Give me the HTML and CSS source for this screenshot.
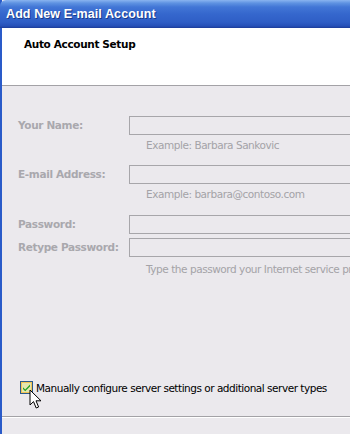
FILE: index.html
```html
<!DOCTYPE html>
<html>
<head>
<meta charset="utf-8">
<link rel="stylesheet" href="styles.css">
</head>
<body>
<div class="window">
  <div class="titlebar"><span class="title">Add New E-mail Account</span></div>
  <div class="header"><div class="heading">Auto Account Setup</div></div>
  <div class="content">
    <div class="form">
      <div class="row row-first">
        <label class="label">Your Name:</label>
        <div class="field"><div class="input"></div><div class="hint">Example: Barbara Sankovic</div></div>
      </div>
      <div class="row row-email">
        <label class="label">E-mail Address:</label>
        <div class="field"><div class="input"></div><div class="hint">Example: barbara@contoso.com</div></div>
      </div>
      <div class="row row-pass">
        <label class="label">Password:</label>
        <div class="field"><div class="input"></div></div>
      </div>
      <div class="row row-retype">
        <label class="label">Retype Password:</label>
        <div class="field"><div class="input"></div><div class="hint hint-long">Type the password your Internet service provider has given you.</div></div>
      </div>
    </div>
    <div class="manual">
      <span class="checkbox">
        <svg width="13" height="13" viewBox="0 0 13 13">
          <rect x="0.5" y="0.5" width="12" height="12" fill="#e3e7b0" stroke="#2b5a8a"/>
          <rect x="1.5" y="1.5" width="10" height="10" fill="none" stroke="#f2c454" stroke-width="1"/>
          <path d="M3 6.2 L5.2 8.6 L10 3.6 L10 5.4 L5.2 10.3 L3 8 Z" fill="#21a121"/>
        </svg>
        <svg class="cursor" width="14" height="21" viewBox="0 0 14 21">
          <path d="M1 1 L1 16 L4.5 12.6 L7.2 19 L9.6 18 L7 11.8 L12 11.8 Z" fill="#fff" stroke="#000" stroke-width="1" stroke-linejoin="miter"/>
        </svg>
      </span>
      <span class="manual-text">Manually configure server settings or additional server types</span>
    </div>
    <div class="footer-line"></div>
  </div>
</div>
</body>
</html>
```
FILE: styles.css
```css
html, body {
  margin: 0;
  padding: 0;
  width: 350px;
  height: 434px;
  overflow: hidden;
  background: #ebe9ed;
}
.window {
  width: 520px;
  height: 434px;
  border-left: 2px solid #2a5bc9;
  box-sizing: border-box;
  display: flex;
  flex-direction: column;
  font-family: "Liberation Sans", Arial, sans-serif;
}
.titlebar {
  height: 28px;
  flex: none;
  margin-left: -2px;
  background: linear-gradient(to bottom, #8ab4f0 0px, #5f93e2 3px, #4276d6 7px, #3567cd 14px, #2f5ec6 22px, #2650b8 26px, #1c3c98 28px);
  display: flex;
  align-items: center;
  padding-left: 6px;
  border-top-left-radius: 6px;
}
.title {
  color: #fff;
  font-weight: bold;
  font-size: 12.5px;
  text-shadow: 1px 1px 0 #1a3a8a;
  letter-spacing: 0.1px;
}
.header {
  height: 57px;
  flex: none;
  background: #fff;
  border-bottom: 1px solid #a3a2a6;
  box-sizing: content-box;
}
.heading {
  font-family: "DejaVu Sans", sans-serif;
  font-size: 10.5px;
  font-weight: bold;
  color: #000;
  padding-left: 22px;
  padding-top: 10px;
  letter-spacing: -0.35px;
}
.content {
  flex: 1;
  background: #ebe9ed;
  display: flex;
  flex-direction: column;
  position: relative;
}
.form {
  display: flex;
  flex-direction: column;
  padding-left: 16px;
  padding-top: 30px;
}
.row {
  display: grid;
  grid-template-columns: 111px 1fr;
  align-items: start;
}
.row-email { margin-top: 13px; }
.row-pass { margin-top: 14px; }
.row-retype { margin-top: 4px; }
.label {
  font-family: "DejaVu Sans", sans-serif;
  font-size: 10.5px;
  font-weight: bold;
  color: #a9a8ad;
  line-height: 19px;
  letter-spacing: -0.35px;
}
.input {
  height: 19px;
  box-sizing: border-box;
  border: 1px solid #a7a6aa;
  border-right: none;
  background: #ebe9ed;
}
.hint {
  font-family: "DejaVu Sans", sans-serif;
  font-size: 10.5px;
  color: #a4a3a7;
  padding-left: 17px;
  line-height: 13px;
  margin-top: 4px;
  letter-spacing: -0.45px;
  white-space: nowrap;
}
.hint-long { margin-top: 6px; }
.manual {
  display: flex;
  align-items: center;
  margin-top: 105px;
  padding-left: 18px;
  height: 13px;
}
.checkbox {
  position: relative;
  width: 13px;
  height: 13px;
  flex: none;
}
.checkbox svg { display: block; }
.cursor {
  position: absolute;
  left: 9px;
  top: 8px;
}
.manual-text {
  font-family: "DejaVu Sans", sans-serif;
  font-size: 10.5px;
  color: #000;
  margin-left: 3px;
  letter-spacing: -0.48px;
  white-space: nowrap;
}
.footer-line {
  margin-top: 22px;
  border-top: 1px solid #a3a2a6;
  border-bottom: 1px solid #fff;
}
```
